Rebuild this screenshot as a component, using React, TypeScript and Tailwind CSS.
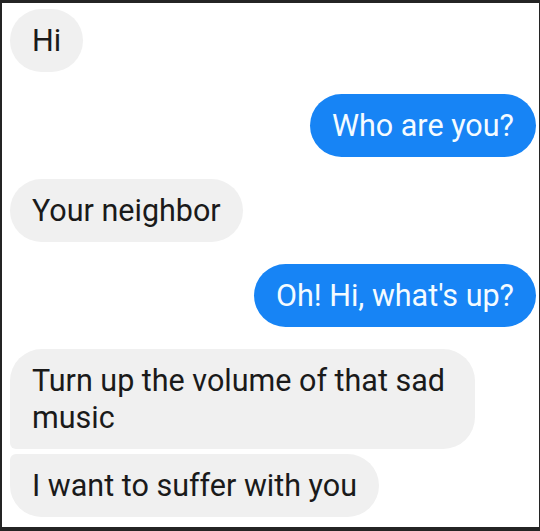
import React from 'react';

type Msg = { text: string; mine?: boolean };

const messages: Msg[] = [
  { text: 'Hi' },
  { text: 'Who are you?', mine: true },
  { text: 'Your neighbor' },
  { text: "Oh! Hi, what's up?", mine: true },
];

const App: React.FC = () => {
  return (
    <div className="w-[540px] h-[531px] bg-[#242424] pt-[3px] pb-[4px] pl-[2px] pr-[1px] font-['Roboto','Liberation_Sans',sans-serif]">
      <div className="h-full bg-white flex flex-col pt-[6px] pl-[8px] pr-[3px] text-[30.5px] leading-[37px]">
        {/* single bubbles */}
        <div className="flex flex-col gap-[22px]">
          {messages.map((m, i) => (
            <div key={i} className={`flex ${m.mine ? 'justify-end' : 'justify-start'}`}>
              <div
                className={`rounded-full px-[22px] py-[13px] ${
                  m.mine ? 'bg-[#1784f5] text-[#f4fbff]' : 'bg-[#f0f0f0] text-[#1a1a1a]'
                }`}
              >
                {m.text}
              </div>
            </div>
          ))}
        </div>

        {/* grouped bubbles */}
        <div className="flex flex-col gap-[5px] mt-[22px] items-start">
          <div className="w-[465px] bg-[#f0f0f0] text-[#1a1a1a] px-[22px] py-[13px] rounded-tl-[32px] rounded-tr-[32px] rounded-br-[32px] rounded-bl-[6px]">
            Turn up the volume of that sad music
          </div>
          <div className="bg-[#f0f0f0] text-[#1a1a1a] px-[22px] py-[13px] rounded-tl-[6px] rounded-tr-[32px] rounded-br-[32px] rounded-bl-[32px]">
            I want to suffer with you
          </div>
        </div>
      </div>
    </div>
  );
};

export default App;
